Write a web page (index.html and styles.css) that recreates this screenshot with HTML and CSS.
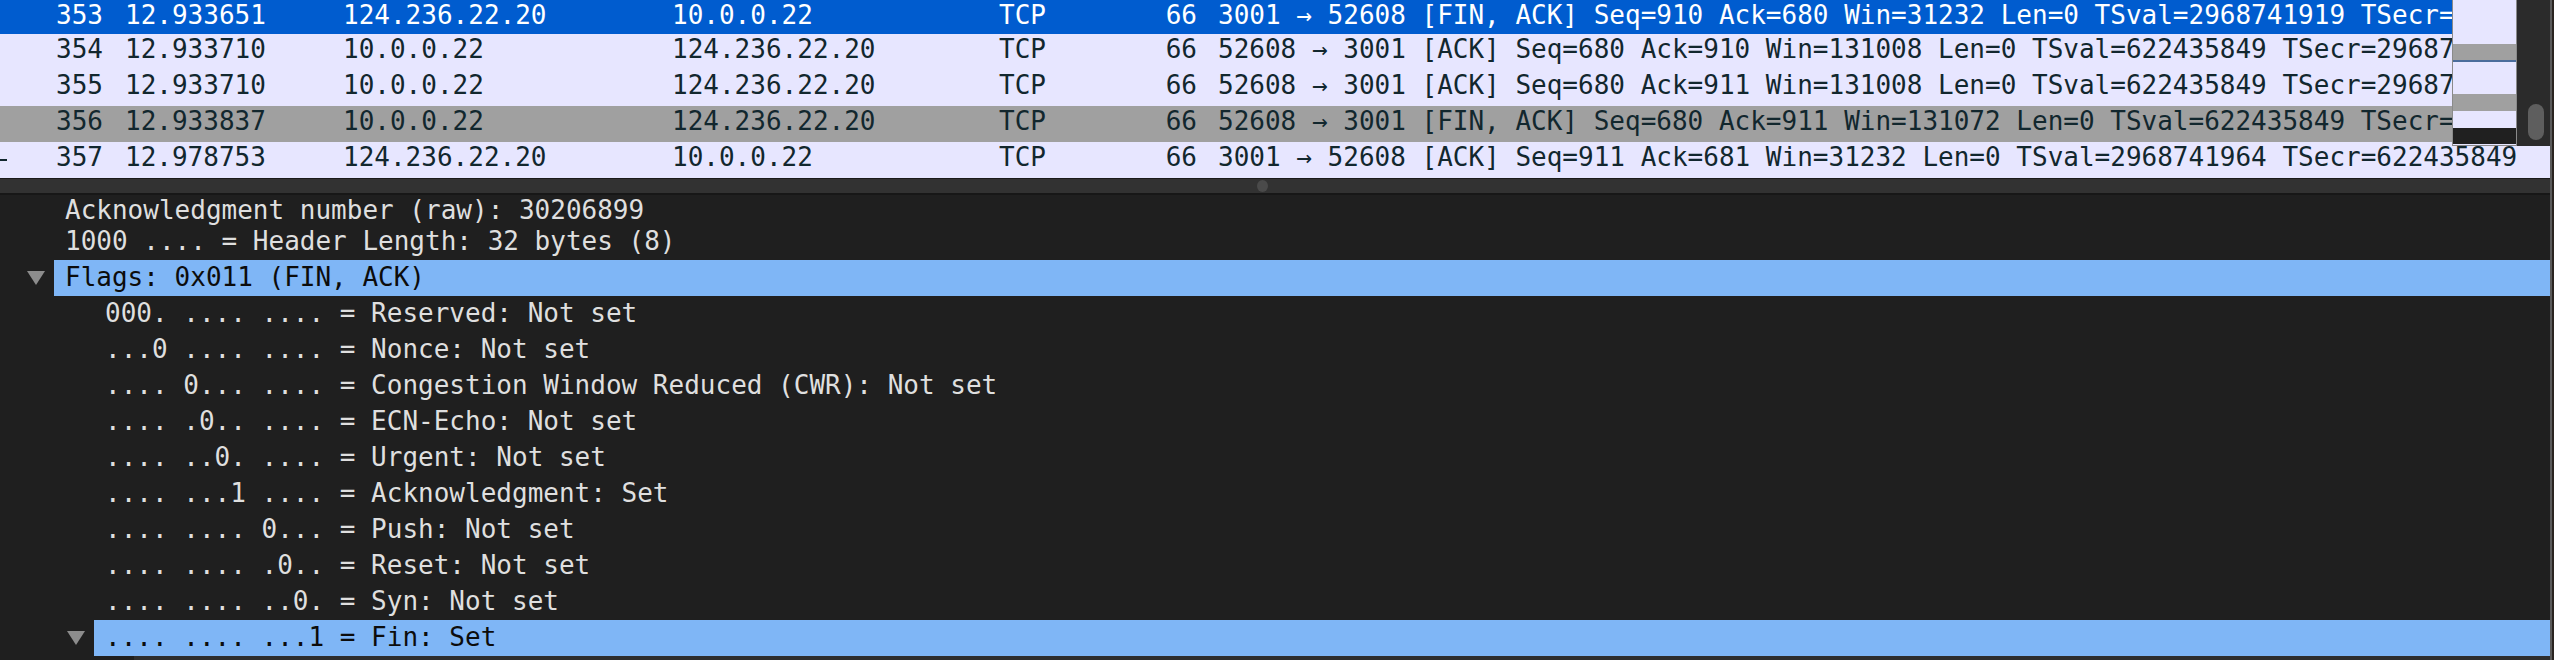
FILE: index.html
```html
<!DOCTYPE html>
<html lang="en">
<head>
<meta charset="utf-8">
<title>Wireshark packet view</title>
<link rel="stylesheet" href="styles.css">
</head>
<body>
<div class="window">
  <div class="main">
    <div class="plist">
      <div class="rows">
        <div class="prow sel first">
          <span class="c no">353</span><span class="c">12.933651</span><span class="c">124.236.22.20</span><span class="c">10.0.0.22</span><span class="c">TCP</span><span class="c len">66</span><span class="c info">3001 → 52608 [FIN, ACK] Seq=910 Ack=680 Win=31232 Len=0 TSval=2968741919 TSecr=62243</span>
        </div>
        <div class="prow tcp">
          <span class="c no">354</span><span class="c">12.933710</span><span class="c">10.0.0.22</span><span class="c">124.236.22.20</span><span class="c">TCP</span><span class="c len">66</span><span class="c info">52608 → 3001 [ACK] Seq=680 Ack=910 Win=131008 Len=0 TSval=622435849 TSecr=29687419</span>
        </div>
        <div class="prow tcp">
          <span class="c no">355</span><span class="c">12.933710</span><span class="c">10.0.0.22</span><span class="c">124.236.22.20</span><span class="c">TCP</span><span class="c len">66</span><span class="c info">52608 → 3001 [ACK] Seq=680 Ack=911 Win=131008 Len=0 TSval=622435849 TSecr=29687419</span>
        </div>
        <div class="prow finsyn">
          <span class="c no">356</span><span class="c">12.933837</span><span class="c">10.0.0.22</span><span class="c">124.236.22.20</span><span class="c">TCP</span><span class="c len">66</span><span class="c info">52608 → 3001 [FIN, ACK] Seq=680 Ack=911 Win=131072 Len=0 TSval=622435849 TSecr=29687</span>
        </div>
        <div class="prow tcp">
          <span class="c no"><span class="rel"></span>357</span><span class="c">12.978753</span><span class="c">124.236.22.20</span><span class="c">10.0.0.22</span><span class="c">TCP</span><span class="c len">66</span><span class="c info">3001 → 52608 [ACK] Seq=911 Ack=681 Win=31232 Len=0 TSval=2968741964 TSecr=622435849</span>
        </div>
      </div>
      <div class="scrollmap">
        <div class="minimap">
          <div class="mm lav h44"></div>
          <div class="mm gray h16"></div>
          <div class="mm line"></div>
          <div class="mm lav h32"></div>
          <div class="mm gray h17"></div>
          <div class="mm lav h17"></div>
          <div class="mm dark h16"></div>
        </div>
        <div class="vscroll"><div class="thumb"></div></div>
      </div>
    </div>
    <div class="splitter"><span class="grip"></span></div>
    <div class="tree">
      <div class="trows">
        <div class="trow d0 tfirst"><span class="tw"></span><span class="tl">Acknowledgment number (raw): 30206899</span></div>
        <div class="trow d0"><span class="tw"></span><span class="tl">1000 .... = Header Length: 32 bytes (8)</span></div>
        <div class="trow d0 hl"><span class="tw"><svg class="tri" width="18" height="14" viewBox="0 0 18 14"><polygon points="0,0 18,0 9,14"/></svg></span><span class="tl">Flags: 0x011 (FIN, ACK)</span></div>
        <div class="trow d1"><span class="tw"></span><span class="tl">000. .... .... = Reserved: Not set</span></div>
        <div class="trow d1"><span class="tw"></span><span class="tl">...0 .... .... = Nonce: Not set</span></div>
        <div class="trow d1"><span class="tw"></span><span class="tl">.... 0... .... = Congestion Window Reduced (CWR): Not set</span></div>
        <div class="trow d1"><span class="tw"></span><span class="tl">.... .0.. .... = ECN-Echo: Not set</span></div>
        <div class="trow d1"><span class="tw"></span><span class="tl">.... ..0. .... = Urgent: Not set</span></div>
        <div class="trow d1"><span class="tw"></span><span class="tl">.... ...1 .... = Acknowledgment: Set</span></div>
        <div class="trow d1"><span class="tw"></span><span class="tl">.... .... 0... = Push: Not set</span></div>
        <div class="trow d1"><span class="tw"></span><span class="tl">.... .... .0.. = Reset: Not set</span></div>
        <div class="trow d1"><span class="tw"></span><span class="tl">.... .... ..0. = Syn: Not set</span></div>
        <div class="trow d1 hl"><span class="tw"><svg class="tri" width="18" height="14" viewBox="0 0 18 14"><polygon points="0,0 18,0 9,14"/></svg></span><span class="tl">.... .... ...1 = Fin: Set</span></div>
      </div>
    </div>
    <div class="hstrip"><span class="hs-left"></span></div>
  </div>
  <div class="edge"></div>
</div>
</body>
</html>
```

FILE: styles.css
```css
html, body {
  margin: 0;
  padding: 0;
}
body {
  width: 2554px;
  height: 660px;
  overflow: hidden;
  background: #1f1f1f;
  font-family: "DejaVu Sans Mono", "Liberation Mono", monospace;
  font-size: 26px;
}
.window {
  display: flex;
  width: 2554px;
  height: 660px;
}
.main {
  width: 2550px;
  display: flex;
  flex-direction: column;
}
.edge {
  width: 4px;
  flex: none;
  background: #2a2420;
  border-left: 2px solid #5a5a5a;
  box-sizing: border-box;
}

/* packet list */
.plist {
  position: relative;
  height: 178px;
  flex: none;
  overflow: hidden;
  background: #e7e6ff;
}
.prow {
  position: relative;
  display: grid;
  grid-template-columns: 117px 218px 329px 327px 139px 80px 1fr;
  height: 36px;
  line-height: 31px;
  white-space: pre;
}
.prow.first {
  height: 34px;
  line-height: 30.4px;
}
.prow.tcp { background: #e7e6ff; color: #12272e; }
.prow.finsyn { background: #a0a0a0; color: #12272e; }
.prow.sel { background: #005ccf; color: #ffffff; }
.c {
  padding-left: 8px;
  overflow: hidden;
}
.c.no {
  padding-left: 0;
  padding-right: 14px;
  text-align: right;
}
.c.len {
  padding-left: 0;
  padding-right: 13px;
  text-align: right;
}
.rel {
  position: absolute;
  left: 0;
  top: 17px;
  width: 7px;
  height: 2px;
  background: #12272e;
}

/* overlay minimap + scrollbar */
.scrollmap {
  position: absolute;
  top: 0;
  right: 0;
  width: 98px;
  height: 146px;
  display: flex;
}
.minimap {
  width: 65px;
  flex: none;
  box-sizing: border-box;
  border: 1px solid #8a8a8a;
  border-top: 0;
  display: flex;
  flex-direction: column;
  background: #e7e6ff;
}
.mm.lav { background: #e7e6ff; }
.mm.gray { background: #a0a0a0; }
.mm.dark { background: #202020; }
.mm.line { height: 2px; background: #4b6d9c; }
.h44 { height: 44px; }
.h32 { height: 32px; }
.h16 { height: 16px; }
.h17 { height: 17px; }
.vscroll {
  flex: 1;
  background: #2b2b2b;
  padding: 104px 0 0 11px;
  box-sizing: border-box;
}
.thumb {
  width: 16px;
  height: 36px;
  border-radius: 8px;
  background: #5e5e5e;
}

/* splitter */
.splitter {
  height: 17px;
  flex: none;
  box-sizing: border-box;
  background: #323232;
  border-top: 1px solid #1a1a1a;
  border-bottom: 2px solid #171717;
  display: flex;
  align-items: center;
  justify-content: center;
}
.grip {
  width: 11px;
  height: 12px;
  border-radius: 50%;
  background: #4a4a4a;
  margin-left: -26px;
}

/* detail tree */
.tree {
  height: 461px;
  flex: none;
  overflow: hidden;
  background: #1f1f1f;
  color: #dfdfdf;
}
.trow {
  display: flex;
  height: 36px;
  line-height: 34px;
  white-space: pre;
}
.trow.tfirst {
  height: 29px;
  line-height: 30.4px;
}
.trow.d1 { padding-left: 40px; }
.tw {
  width: 54px;
  flex: none;
  box-sizing: border-box;
  padding: 11px 0 0 27px;
}
.tri {
  display: block;
  fill: #8c8c8c;
}
.tl {
  flex: 1;
  padding-left: 11px;
}
.trow.hl .tl {
  background: #7fb6f6;
  color: #0c0c0c;
}

.hstrip {
  height: 4px;
  flex: none;
  background: #2e2e2e;
  display: flex;
}
.hs-left {
  width: 134px;
  background: #1f1f1f;
}
```
